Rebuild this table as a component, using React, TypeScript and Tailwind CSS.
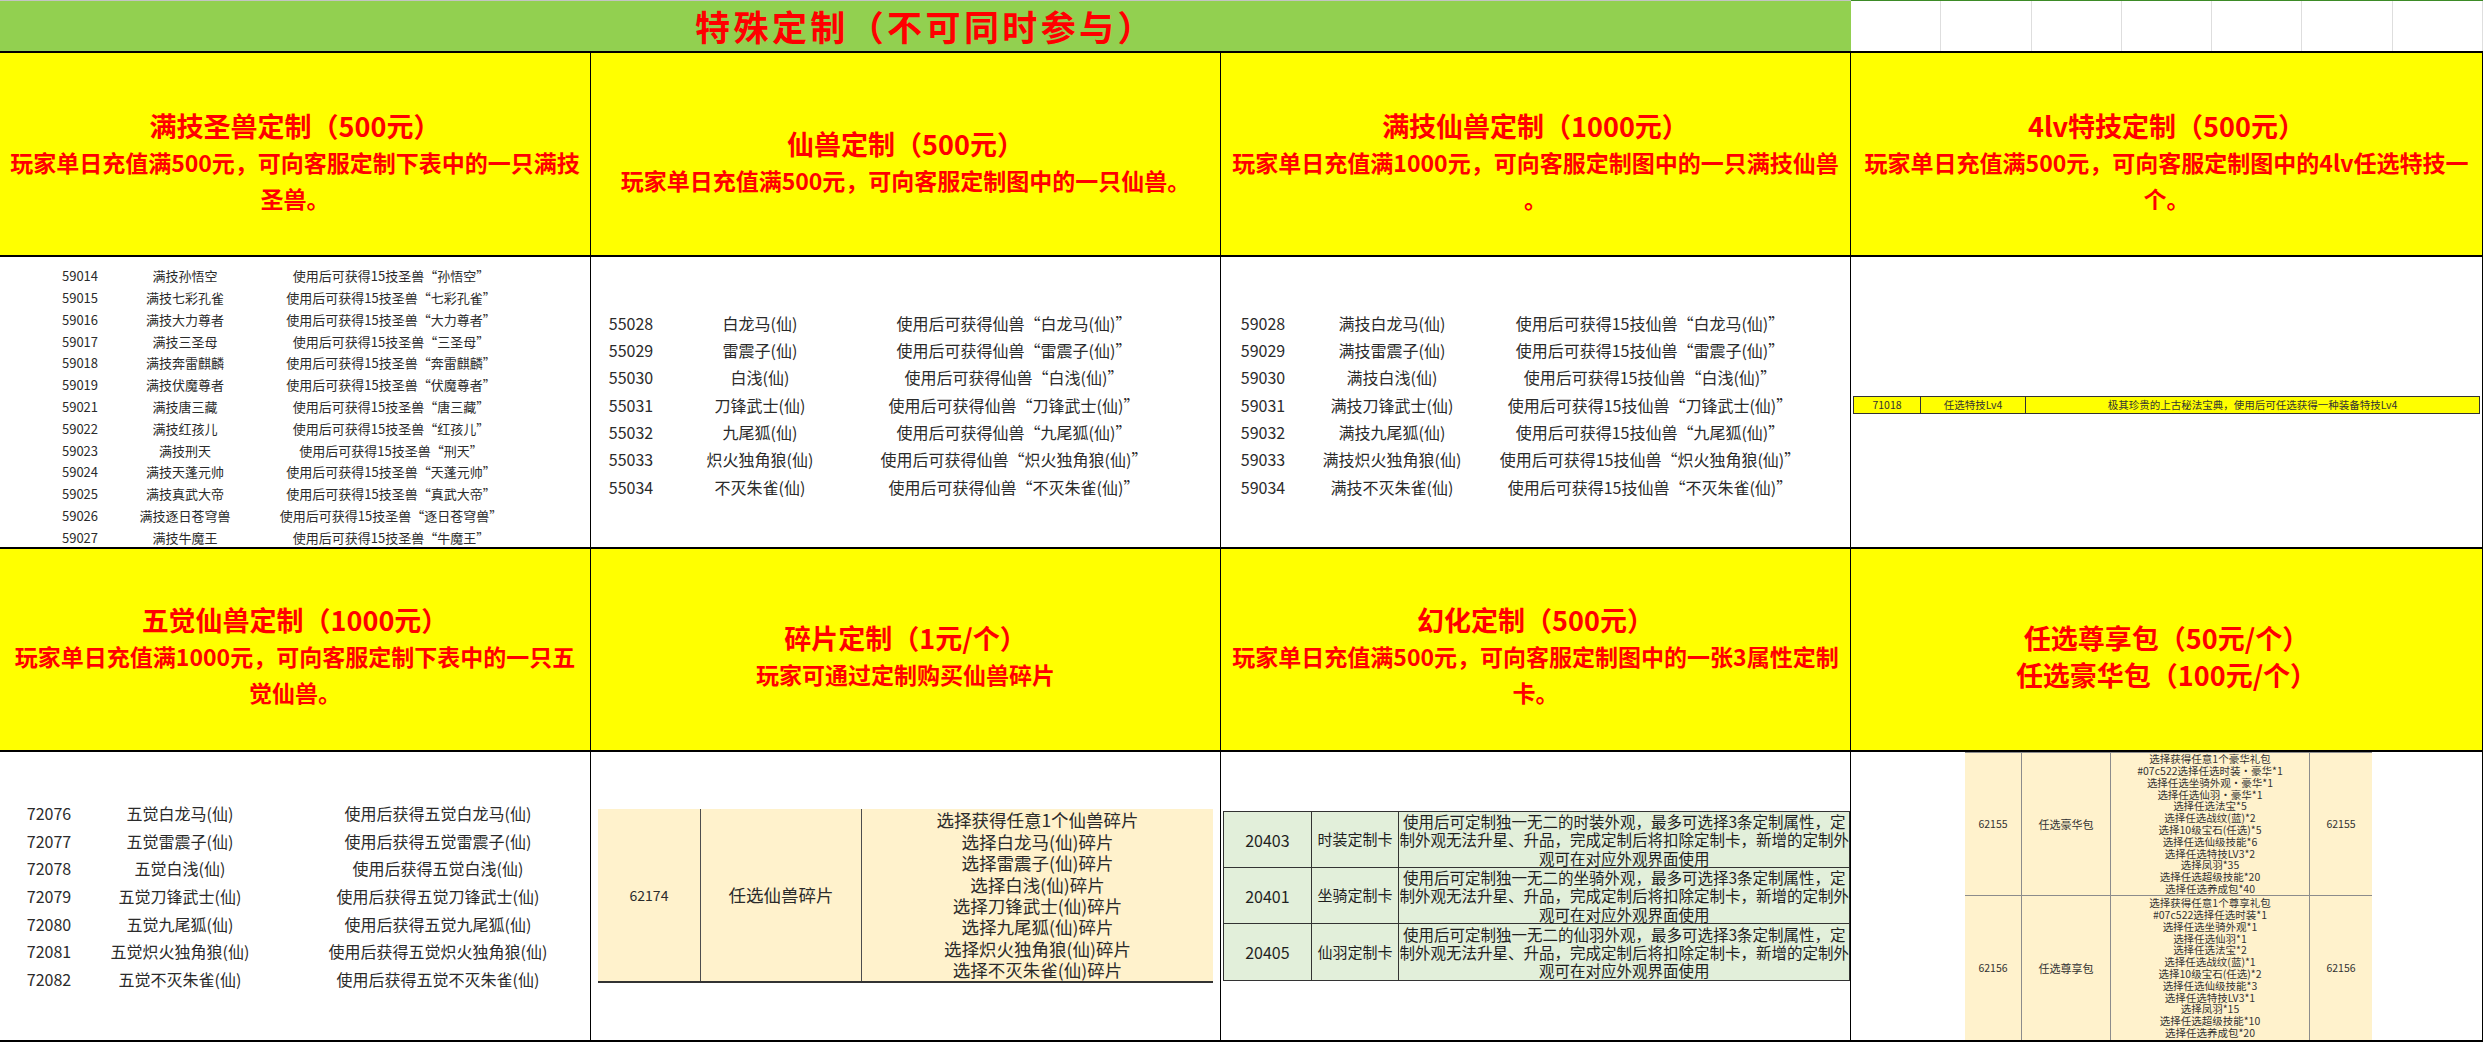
import clsx from "clsx";

type Item = [string, string, string];

const xianNames = ["白龙马(仙)", "雷震子(仙)", "白浅(仙)", "刀锋武士(仙)", "九尾狐(仙)", "炽火独角狼(仙)", "不灭朱雀(仙)"];

const sacred: Item[] = [
  ["59014", "孙悟空"],
  ["59015", "七彩孔雀"],
  ["59016", "大力尊者"],
  ["59017", "三圣母"],
  ["59018", "奔雷麒麟"],
  ["59019", "伏魔尊者"],
  ["59021", "唐三藏"],
  ["59022", "红孩儿"],
  ["59023", "刑天"],
  ["59024", "天蓬元帅"],
  ["59025", "真武大帝"],
  ["59026", "逐日苍穹兽"],
  ["59027", "牛魔王"],
].map(([id, n]) => [id, `满技${n}`, `使用后可获得15技圣兽“${n}”`]);

const xian: Item[] = xianNames.map((n, i) => [`${55028 + i}`, n, `使用后可获得仙兽“${n}”`]);
const fullXian: Item[] = xianNames.map((n, i) => [`${59028 + i}`, `满技${n}`, `使用后可获得15技仙兽“${n}”`]);
const awakened: Item[] = xianNames.map((n, i) => [`${72076 + i}`, `五觉${n}`, `使用后获得五觉${n}`]);

const shards = ["选择获得任意1个仙兽碎片", ...xianNames.map((n) => `选择${n}碎片`)];

const cards = [
  { id: "20403", name: "时装定制卡", kind: "时装" },
  { id: "20401", name: "坐骑定制卡", kind: "坐骑" },
  { id: "20405", name: "仙羽定制卡", kind: "仙羽" },
];

const packs = [
  {
    id: "62155",
    name: "任选豪华包",
    items: [
      "选择获得任意1个豪华礼包",
      "#07c522选择任选时装・豪华*1",
      "选择任选坐骑外观・豪华*1",
      "选择任选仙羽・豪华*1",
      "选择任选法宝*5",
      "选择任选战纹(蓝)*2",
      "选择10级宝石(任选)*5",
      "选择任选仙级技能*6",
      "选择任选特技LV3*2",
      "选择凤羽*35",
      "选择任选超级技能*20",
      "选择任选养成包*40",
    ],
  },
  {
    id: "62156",
    name: "任选尊享包",
    items: [
      "选择获得任意1个尊享礼包",
      "#07c522选择任选时装*1",
      "选择任选坐骑外观*1",
      "选择任选仙羽*1",
      "选择任选法宝*2",
      "选择任选战纹(蓝)*1",
      "选择10级宝石(任选)*2",
      "选择任选仙级技能*3",
      "选择任选特技LV3*1",
      "选择凤羽*15",
      "选择任选超级技能*10",
      "选择任选养成包*20",
    ],
  },
];

const PromoCell = ({ titles, lines = [], pad }: { titles: string[]; lines?: string[]; pad: string }) => (
  <div
    className={clsx(
      "bg-[#ffff00] border-r border-black flex flex-col items-center justify-center font-bold text-[#ff0000] whitespace-nowrap text-center",
      pad
    )}
  >
    {titles.map((t) => (
      <div key={t} className="text-[27px] leading-[37px]">
        {t}
      </div>
    ))}
    {lines.map((l) => (
      <div key={l} className="text-[23px] leading-[36px]">
        {l}
      </div>
    ))}
  </div>
);

const ListTable = ({
  rows,
  wrap,
  row,
  c1,
  c2,
  c3,
}: {
  rows: Item[];
  wrap: string;
  row: string;
  c1: string;
  c2: string;
  c3: string;
}) => (
  <div className={clsx("border-r border-black flex flex-col justify-center text-[#2b2b2b] whitespace-nowrap", wrap)}>
    {rows.map(([a, b, c]) => (
      <div key={a} className={clsx("flex items-center", row)}>
        <span className={clsx("text-center shrink-0", c1)}>{a}</span>
        <span className={clsx("text-center shrink-0", c2)}>{b}</span>
        <span className={clsx("text-center shrink-0", c3)}>{c}</span>
      </div>
    ))}
  </div>
);

export default function App() {
  return (
    <div className="w-[2483px] h-[1042px] overflow-hidden bg-white flex flex-col font-['Noto_Sans_CJK_SC','Noto_Sans',sans-serif]">
      {/* title bar */}
      <div className="h-[53px] shrink-0 flex border-b-2 border-black">
        <div className="w-[1851px] bg-[#92d050] border-t border-[#c4c4c4] flex items-center justify-center text-[35px] leading-[48px] tracking-[3.4px] font-bold text-[#ff0000]">
          特殊定制（不可同时参与）
        </div>
        <div className="flex-1 flex border-t border-[#3d8b27]">
          {[0, 1, 2, 3, 4, 5, 6].map((i) => (
            <div key={i} className="flex-1 border-r border-[#dedede]" />
          ))}
        </div>
      </div>

      {/* first offers */}
      <div className="h-[204px] shrink-0 grid grid-cols-[591px_630px_630px_632px] border-b-2 border-black">
        <PromoCell
          pad="pt-[14px]"
          titles={["满技圣兽定制（500元）"]}
          lines={["玩家单日充值满500元，可向客服定制下表中的一只满技", "圣兽。"]}
        />
        <PromoCell pad="pt-[14px]" titles={["仙兽定制（500元）"]} lines={["玩家单日充值满500元，可向客服定制图中的一只仙兽。"]} />
        <PromoCell
          pad="pt-[14px]"
          titles={["满技仙兽定制（1000元）"]}
          lines={["玩家单日充值满1000元，可向客服定制图中的一只满技仙兽", "。"]}
        />
        <PromoCell
          pad="pt-[14px]"
          titles={["4lv特技定制（500元）"]}
          lines={["玩家单日充值满500元，可向客服定制图中的4lv任选特技一", "个。"]}
        />
      </div>

      <div className="h-[292px] shrink-0 grid grid-cols-[591px_630px_630px_632px] border-b-2 border-black">
        <ListTable
          rows={sacred}
          wrap="pt-[8px] text-[13px]"
          row="h-[21.8px]"
          c1="ml-[45px] w-[70px]"
          c2="ml-[5px] w-[130px]"
          c3="ml-[10px] w-[262px]"
        />
        <ListTable
          rows={xian}
          wrap="pt-[4px] text-[16px]"
          row="h-[27.3px]"
          c1="ml-[10px] w-[60px]"
          c2="ml-[19px] w-[160px]"
          c3="ml-[14px] w-[320px]"
        />
        <ListTable
          rows={fullXian}
          wrap="pt-[4px] text-[16px]"
          row="h-[27.3px]"
          c1="ml-[12px] w-[60px]"
          c2="ml-[19px] w-[160px]"
          c3="ml-[13px] w-[330px]"
        />
        <div className="border-r border-black flex items-center pt-[4px] pl-[2px]">
          <div className="w-[627px] h-[18px] flex bg-[#ffff00] border border-[#333] text-[10.5px] leading-[16px] text-[#333] whitespace-nowrap">
            <div className="w-[67px] border-r border-[#333] flex items-center justify-center">71018</div>
            <div className="w-[105px] border-r border-[#333] flex items-center justify-center">任选特技Lv4</div>
            <div className="flex-1 flex items-center justify-center">极其珍贵的上古秘法宝典，使用后可任选获得一种装备特技Lv4</div>
          </div>
        </div>
      </div>

      {/* second offers */}
      <div className="h-[203px] shrink-0 grid grid-cols-[591px_630px_630px_632px] border-b-2 border-black">
        <PromoCell
          pad="pt-[12px]"
          titles={["五觉仙兽定制（1000元）"]}
          lines={["玩家单日充值满1000元，可向客服定制下表中的一只五", "觉仙兽。"]}
        />
        <PromoCell pad="pt-[12px]" titles={["碎片定制（1元/个）"]} lines={["玩家可通过定制购买仙兽碎片"]} />
        <PromoCell
          pad="pt-[12px]"
          titles={["幻化定制（500元）"]}
          lines={["玩家单日充值满500元，可向客服定制图中的一张3属性定制", "卡。"]}
        />
        <PromoCell pad="pt-[12px]" titles={["任选尊享包（50元/个）", "任选豪华包（100元/个）"]} />
      </div>

      <div className="h-[290px] shrink-0 grid grid-cols-[591px_630px_630px_632px] border-b-2 border-black">
        <ListTable
          rows={awakened}
          wrap="text-[16px]"
          row="h-[27.7px]"
          c1="ml-[19px] w-[60px]"
          c2="ml-[21px] w-[160px]"
          c3="ml-[30px] w-[296px]"
        />

        <div className="border-r border-black flex items-center justify-center">
          <div className="w-[615px] grid grid-cols-[103px_161px_351px] bg-[#fff2cc] border-b-2 border-[#333] text-[#2b2b2b] whitespace-nowrap">
            <div className="border-r border-[#4d4d4d] flex items-center justify-center text-[14px]">62174</div>
            <div className="border-r border-[#4d4d4d] flex items-center justify-center text-[17.5px]">任选仙兽碎片</div>
            <div className="flex flex-col items-center text-[17.5px] leading-[21.4px]">
              {shards.map((s) => (
                <div key={s}>{s}</div>
              ))}
            </div>
          </div>
        </div>

        <div className="border-r border-black flex items-center pl-[2px]">
          <div className="w-[627px] bg-[#e2efda] border border-[#333] text-[#1f1f1f] whitespace-nowrap">
            {cards.map((c, i) => (
              <div
                key={c.id}
                className={clsx("h-[56px] flex", i < cards.length - 1 && "border-b border-[#333]")}
              >
                <div className="w-[90px] border-r border-[#333] flex items-center justify-center text-[16px]">{c.id}</div>
                <div className="w-[90px] border-r border-[#333] flex items-center justify-center text-[15px]">{c.name}</div>
                <div className="flex-1 flex flex-col items-center justify-center text-[15.5px] leading-[18.3px]">
                  <div>{`使用后可定制独一无二的${c.kind}外观，最多可选择3条定制属性，定`}</div>
                  <div>制外观无法升星、升品，完成定制后将扣除定制卡，新增的定制外</div>
                  <div>观可在对应外观界面使用</div>
                </div>
              </div>
            ))}
          </div>
        </div>

        <div className="border-r border-black flex pl-[114px]">
          <div className="w-[407px] flex flex-col bg-[#fff2cc] border-t border-[#8c8c8c] text-[#333] whitespace-nowrap">
            {packs.map((p, i) => (
              <div key={p.id} className={clsx("flex", i === 0 ? "h-[143px] border-b border-[#8c8c8c]" : "flex-1")}>
                <div className="w-[57px] border-r border-[#8c8c8c] flex items-center justify-center text-[10.5px]">{p.id}</div>
                <div className="w-[89px] border-r border-[#8c8c8c] flex items-center justify-center text-[11px]">{p.name}</div>
                <div className="w-[199px] border-r border-[#8c8c8c] flex flex-col items-center justify-center text-[10.5px] leading-[11.8px]">
                  {p.items.map((t) => (
                    <div key={t}>{t}</div>
                  ))}
                </div>
                <div className="flex-1 flex items-center justify-center text-[10.5px]">{p.id}</div>
              </div>
            ))}
          </div>
        </div>
      </div>
    </div>
  );
}
